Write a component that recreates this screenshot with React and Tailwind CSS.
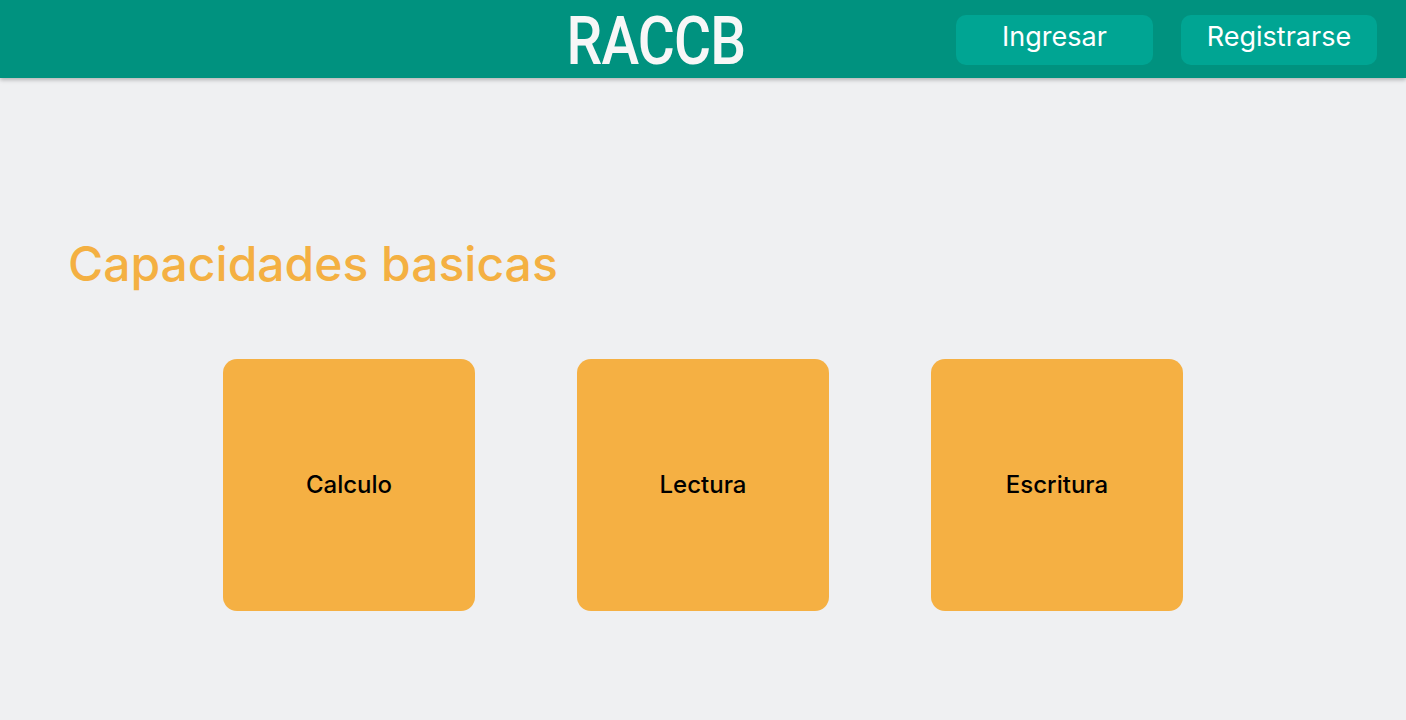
export default function App() {
  const cards = ["Calculo", "Lectura", "Escritura"];
  return (
    <div className="min-h-[720px] bg-[#eff0f2]" style={{ fontFamily: "Inter, 'Open Sans', sans-serif" }}>
      <header className="h-[78px] bg-[#00927f] shadow-[0_2px_4px_rgba(0,0,0,0.25)] flex items-center relative z-10">
        <div className="w-[565px]" />
        <div className="w-[181px] flex justify-center">
          <span className="inline-block text-[#f7f7f7] text-[66px] leading-none font-medium pt-[6px] scale-x-[0.86] tracking-[-1px]" style={{ fontFamily: "Roboto, sans-serif" }}>RACCB</span>
        </div>
        <div className="flex-1" />
        <div className="flex gap-[28px] pr-[29px] pt-[2px]">
          <button className="w-[197px] h-[50px] rounded-[10px] bg-[#00a593] text-white text-[27px] pb-[5px]">Ingresar</button>
          <button className="w-[196px] h-[50px] rounded-[10px] bg-[#00a593] text-white text-[27px] pb-[5px]">Registrarse</button>
        </div>
      </header>
      <main className="pt-[156px]">
        <h1 className="pl-[68px] text-[48px] leading-[60px] font-medium text-[#f4b042]">Capacidades basicas</h1>
        <div className="flex justify-center gap-[102px] pt-[65px]">
          {cards.map((c) => (
            <div key={c} className="w-[252px] h-[252px] rounded-[14px] bg-[#f5b043] flex items-center justify-center">
              <span className="text-[24px] font-medium text-black">{c}</span>
            </div>
          ))}
        </div>
      </main>
    </div>
  );
}
